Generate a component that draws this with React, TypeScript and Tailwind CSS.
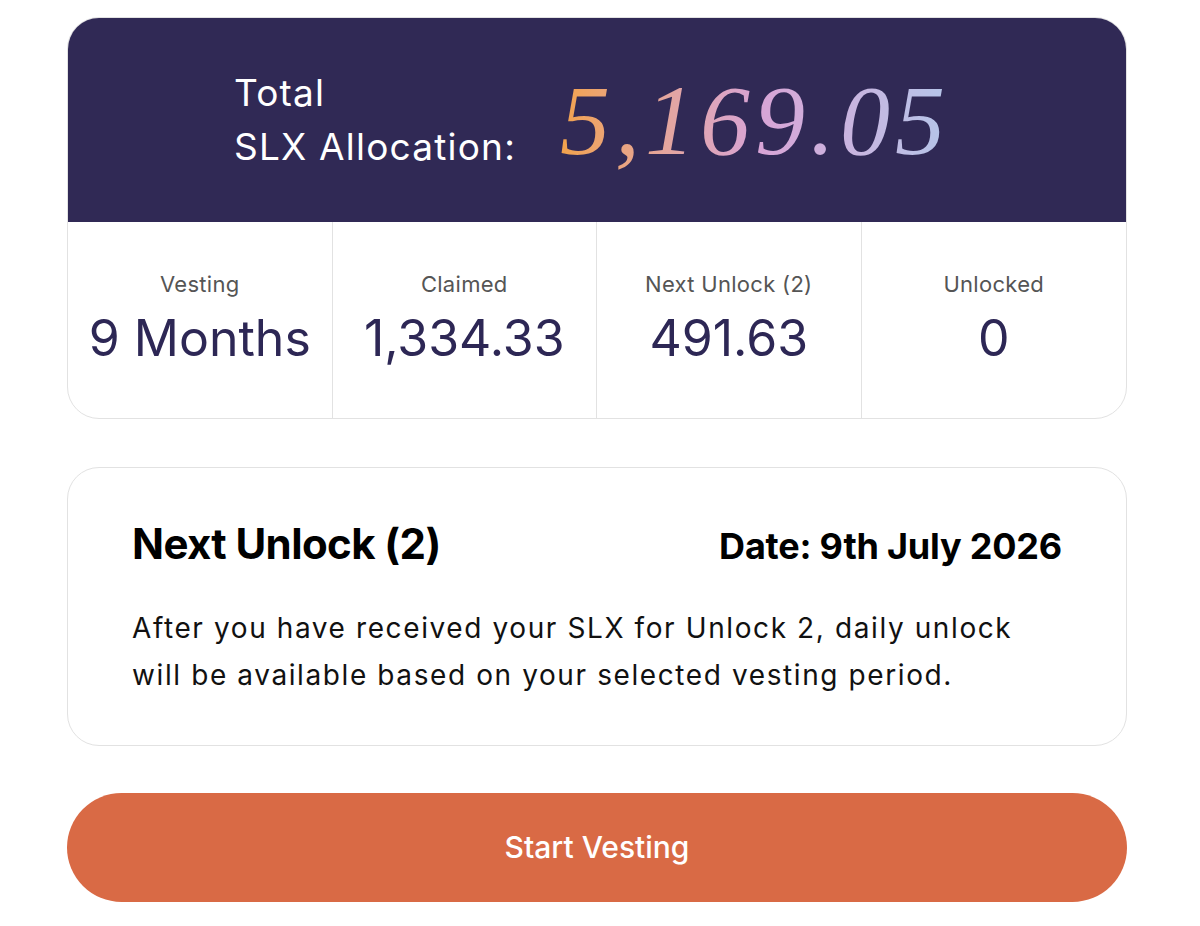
export default function App() {
  const stats = [
    { label: "Vesting", value: "9 Months" },
    { label: "Claimed", value: "1,334.33" },
    { label: "Next Unlock (2)", value: "491.63" },
    { label: "Unlocked", value: "0" },
  ];
  return (
    <div className="min-h-[926px] bg-white pt-[17px] font-['Inter',sans-serif]">
      <div className="ml-[67px] w-[1060px]">
        <div className="overflow-hidden rounded-[32px] border border-[#e2e2e2]">
          <div className="flex h-[204px] items-center justify-center gap-[44px] bg-[#302955] pr-[4px]">
            <div className="text-[37px] leading-[54px] tracking-[1.2px] text-white">
              <div>Total</div>
              <div>SLX Allocation:</div>
            </div>
            <div className="mt-[2px] bg-gradient-to-r from-[#f2a24a] via-[#d8a4d6] to-[#b3c6ea] bg-clip-text pr-[6px] font-['Liberation_Serif',serif] text-[100px] italic leading-none tracking-[5px] text-transparent">
              5,169.05
            </div>
          </div>
          <div className="grid h-[196px] grid-cols-4 divide-x divide-[#e2e2e2]">
            {stats.map((s) => (
              <div key={s.label} className="flex flex-col items-center pt-[47px]">
                <div className="text-[22px] leading-[30px] tracking-[0.3px] text-[#555]">{s.label}</div>
                <div className="mt-[9px] text-[50px] leading-[60px] text-[#2d2755]">{s.value}</div>
              </div>
            ))}
          </div>
        </div>
        <div className="mt-[48px] rounded-[32px] border border-[#e2e2e2] px-[64px] pb-[46px] pt-[51px]">
          <div className="flex items-baseline justify-between">
            <div className="text-[42px] font-bold leading-[50px] tracking-[-0.6px] text-black">Next Unlock (2)</div>
            <div className="text-[36px] font-bold leading-[50px] tracking-[-0.2px] text-black">Date: 9th July 2026</div>
          </div>
          <p className="mt-[34px] max-w-[900px] text-[28px] leading-[47px] tracking-[1.6px] text-[#111]">
            After you have received your SLX for Unlock 2, daily unlock
            <br />
            will be available based on your selected vesting period.
          </p>
        </div>
        <button className="mt-[47px] flex h-[109px] w-full items-center justify-center rounded-full bg-[#d96a45] text-[30px] font-medium text-white">
          Start Vesting
        </button>
      </div>
    </div>
  );
}
